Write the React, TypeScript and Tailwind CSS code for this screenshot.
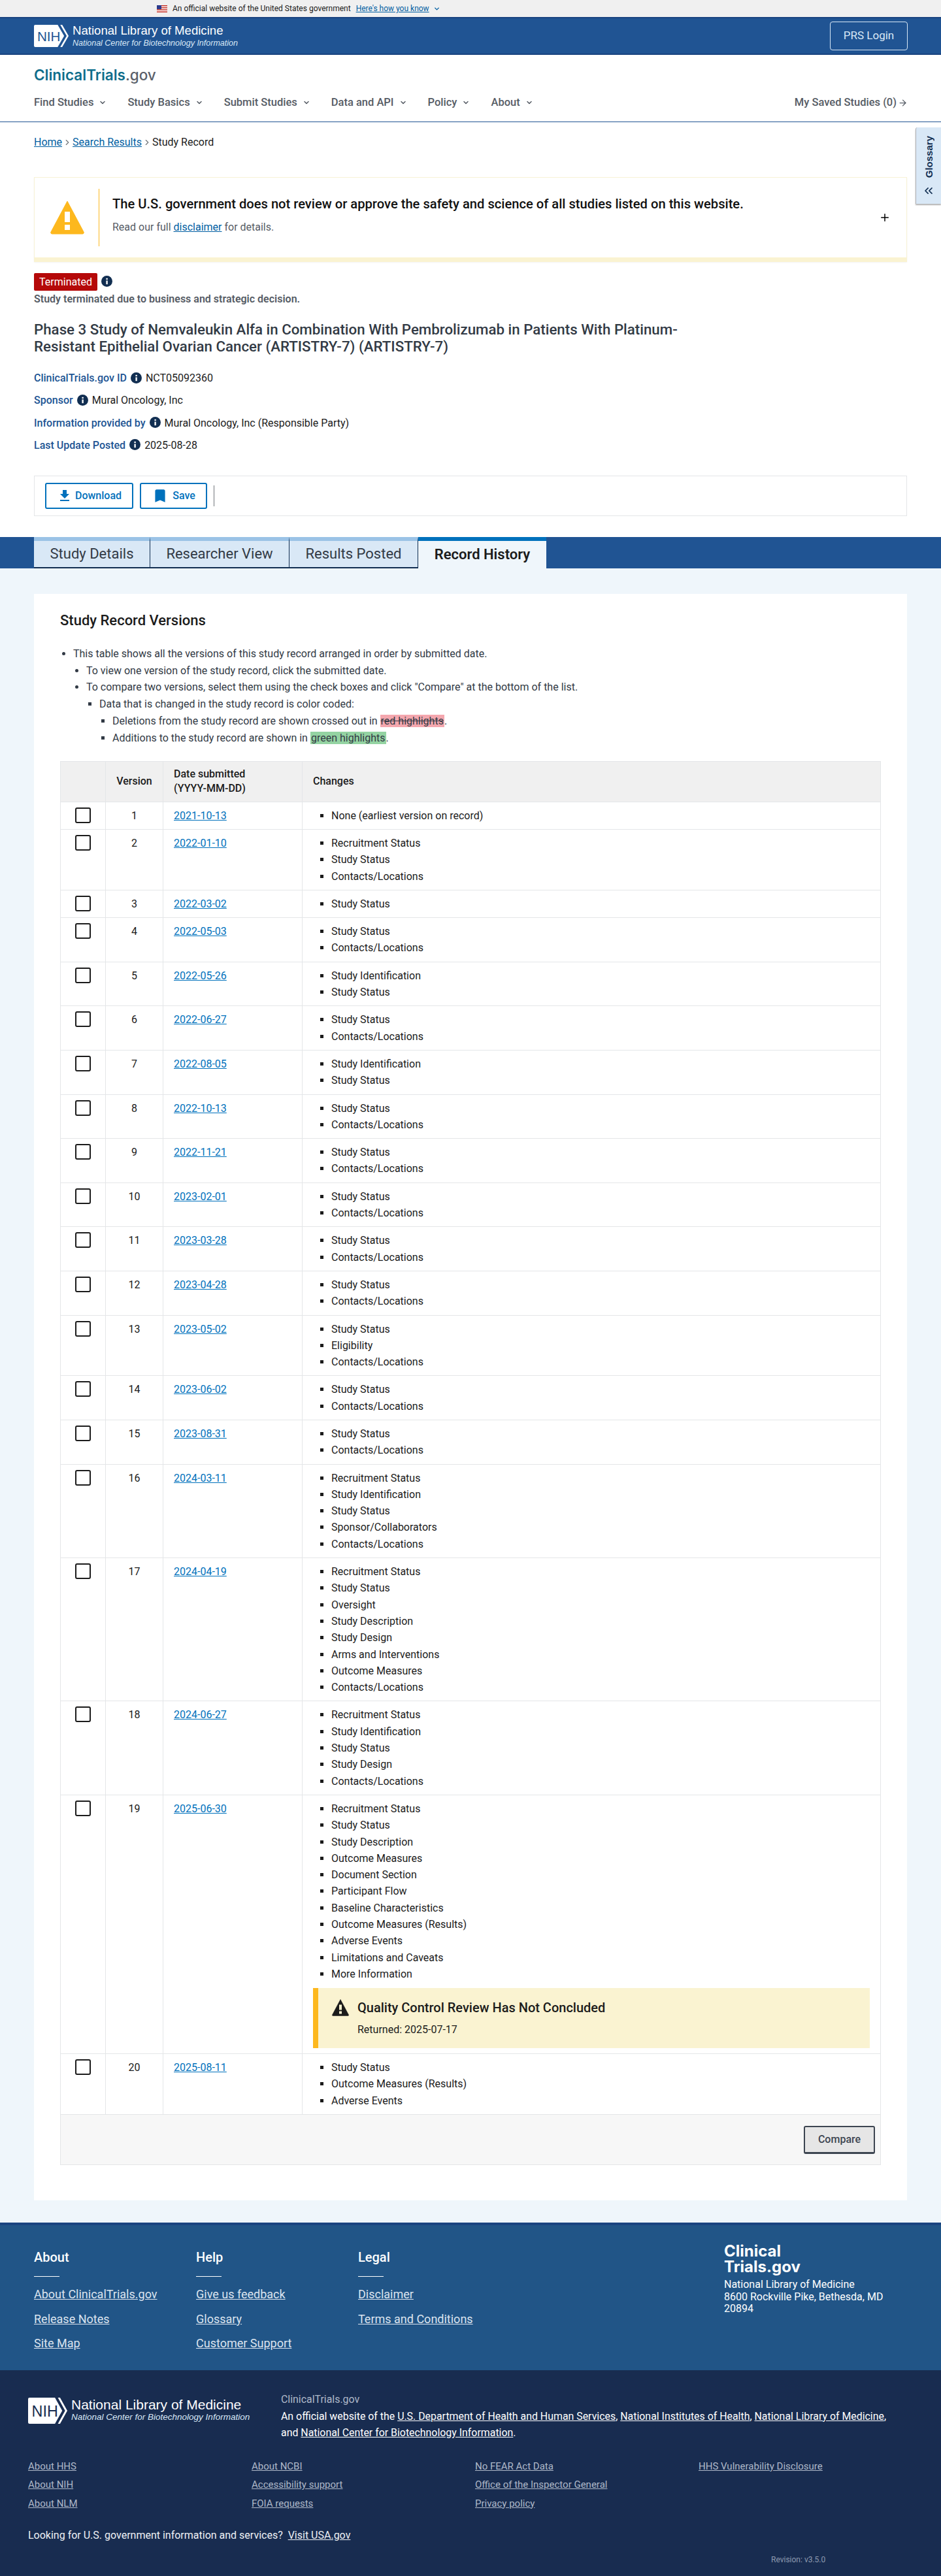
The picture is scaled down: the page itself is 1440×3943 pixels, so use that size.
import { ChevronDown, ChevronsLeft, ArrowRight, ChevronRight, Plus } from 'lucide-react';
import { MdFileDownload, MdBookmark } from 'react-icons/md';

interface VersionRow {
  version: number;
  date: string;
  changes: string[];
  alert?: boolean;
}

const statusContacts = ['Study Status', 'Contacts/Locations'];
const identStatus = ['Study Identification', 'Study Status'];

const versions: VersionRow[] = [
  { version: 1, date: '2021-10-13', changes: ['None (earliest version on record)'] },
  { version: 2, date: '2022-01-10', changes: ['Recruitment Status', 'Study Status', 'Contacts/Locations'] },
  { version: 3, date: '2022-03-02', changes: ['Study Status'] },
  { version: 4, date: '2022-05-03', changes: statusContacts },
  { version: 5, date: '2022-05-26', changes: identStatus },
  { version: 6, date: '2022-06-27', changes: statusContacts },
  { version: 7, date: '2022-08-05', changes: identStatus },
  { version: 8, date: '2022-10-13', changes: statusContacts },
  { version: 9, date: '2022-11-21', changes: statusContacts },
  { version: 10, date: '2023-02-01', changes: statusContacts },
  { version: 11, date: '2023-03-28', changes: statusContacts },
  { version: 12, date: '2023-04-28', changes: statusContacts },
  { version: 13, date: '2023-05-02', changes: ['Study Status', 'Eligibility', 'Contacts/Locations'] },
  { version: 14, date: '2023-06-02', changes: statusContacts },
  { version: 15, date: '2023-08-31', changes: statusContacts },
  {
    version: 16,
    date: '2024-03-11',
    changes: ['Recruitment Status', 'Study Identification', 'Study Status', 'Sponsor/Collaborators', 'Contacts/Locations'],
  },
  {
    version: 17,
    date: '2024-04-19',
    changes: [
      'Recruitment Status',
      'Study Status',
      'Oversight',
      'Study Description',
      'Study Design',
      'Arms and Interventions',
      'Outcome Measures',
      'Contacts/Locations',
    ],
  },
  {
    version: 18,
    date: '2024-06-27',
    changes: ['Recruitment Status', 'Study Identification', 'Study Status', 'Study Design', 'Contacts/Locations'],
  },
  {
    version: 19,
    date: '2025-06-30',
    alert: true,
    changes: [
      'Recruitment Status',
      'Study Status',
      'Study Description',
      'Outcome Measures',
      'Document Section',
      'Participant Flow',
      'Baseline Characteristics',
      'Outcome Measures (Results)',
      'Adverse Events',
      'Limitations and Caveats',
      'More Information',
    ],
  },
  { version: 20, date: '2025-08-11', changes: ['Study Status', 'Outcome Measures (Results)', 'Adverse Events'] },
];

const navItems = ['Find Studies', 'Study Basics', 'Submit Studies', 'Data and API', 'Policy', 'About'];
const tabs = [
  { label: 'Study Details', width: 'w-[178px]' },
  { label: 'Researcher View', width: 'w-[213px]' },
  { label: 'Results Posted', width: 'w-[197px]' },
];

const footerColumns = [
  { title: 'About', width: 'w-[248px]', links: ['About ClinicalTrials.gov', 'Release Notes', 'Site Map'] },
  { title: 'Help', width: 'w-[248px]', links: ['Give us feedback', 'Glossary', 'Customer Support'] },
  { title: 'Legal', width: 'w-[300px]', links: ['Disclaimer', 'Terms and Conditions'] },
];

const policyColumns = [
  ['About HHS', 'About NIH', 'About NLM'],
  ['About NCBI', 'Accessibility support', 'FOIA requests'],
  ['No FEAR Act Data', 'Office of the Inspector General', 'Privacy policy'],
  ['HHS Vulnerability Disclosure'],
];

function InfoIcon() {
  return (
    <svg viewBox="0 0 16 16" className="w-[17px] h-[17px] shrink-0 -mt-[2px]">
      <circle cx="8" cy="8" r="8" fill="#112e51" />
      <rect x="7" y="7" width="2.2" height="5.4" fill="#fff" />
      <rect x="7" y="3.6" width="2.2" height="2.1" fill="#fff" />
    </svg>
  );
}

function NihLogo({ fill, className }: { fill: string; className: string }) {
  return (
    <svg viewBox="0 0 54 36" preserveAspectRatio="none" className={className}>
      <path d="M2 0H37L47 18L37 36H2a2 2 0 0 1-2-2V2a2 2 0 0 1 2-2Z" fill="#fff" />
      <path d="M41 0H44L54 18L44 36H41L51 18Z" fill="#fff" />
      <text x="5" y="26" fontFamily="Liberation Sans, sans-serif" fontSize="21" fill={fill}>
        NIH
      </text>
    </svg>
  );
}

function WarningIcon({ className, fill, mark }: { className: string; fill: string; mark: string }) {
  return (
    <svg viewBox="0 0 52 52" className={className}>
      <path d="M26 1L51 48a2 2 0 0 1-2 3H3a2 2 0 0 1-2-3Z" fill={fill} stroke={fill} strokeLinejoin="round" strokeWidth="1" />
      <rect x="22" y="17" width="8" height="16" fill={mark} />
      <rect x="22" y="37" width="8" height="8" fill={mark} />
    </svg>
  );
}

function Flag() {
  return (
    <svg viewBox="0 0 16 11" className="w-[16px] h-[11px]">
      <rect width="16" height="11" fill="#fff" />
      <rect width="16" height="1.6" fill="#c8382e" />
      <rect y="3.1" width="16" height="1.6" fill="#c8382e" />
      <rect y="6.2" width="16" height="1.6" fill="#c8382e" />
      <rect y="9.4" width="16" height="1.6" fill="#c8382e" />
      <rect width="7" height="6" fill="#2b3a8c" />
    </svg>
  );
}

export default function App() {
  return (
    <div className="relative font-['Roboto',sans-serif] text-[16px] text-[#1b1b1b] bg-white">
      {/* Gov banner */}
      <div className="h-[26px] bg-[#f0f0f0] flex items-center pl-[240px] text-[12px] gap-[8px]">
        <Flag />
        <span className="text-[#1b1b1b]">An official website of the United States government</span>
        <span className="text-[#005ea2] underline">Here's how you know</span>
        <ChevronDown size={11} strokeWidth={3} className="text-[#005ea2] -ml-[2px]" />
      </div>

      {/* NLM header */}
      <div className="h-[58px] bg-[#205493] border-t-2 border-b-2 border-[#1a4480] flex items-center justify-between pl-[52px] pr-[51px]">
        <div className="flex items-center gap-[6px]">
          <NihLogo fill="#205493" className="w-[53px] h-[34px] shrink-0" />
          <div className="text-white leading-none">
            <div className="text-[18.6px] font-['Liberation_Sans',sans-serif]">National Library of Medicine</div>
            <div className="text-[12.5px] italic text-[#d9e8f6] mt-[3px] font-['Liberation_Sans',sans-serif]">
              National Center for Biotechnology Information
            </div>
          </div>
        </div>
        <div className="w-[119px] h-[44px] border border-[#d9e8f6] rounded-[4px] flex items-center justify-center text-[#d9e8f6] text-[17px]">
          PRS Login
        </div>
      </div>

      {/* Site nav */}
      <div className="h-[103px] border-b border-[#205493] px-[52px] pt-[15px]">
        <div className="font-['Inter',sans-serif] font-semibold text-[22.5px] leading-[32px]">
          <span className="text-[#0f6e8c]">ClinicalTrials</span>
          <span className="text-[#5b616b] font-medium">.gov</span>
        </div>
        <div className="flex items-center justify-between mt-[14px] text-[#565c65] font-medium text-[16.5px] leading-[24px]">
          <div className="flex gap-[32px]">
            {navItems.map((item) => (
              <div key={item} className="flex items-center gap-[8px]">
                {item}
                <ChevronDown size={12} strokeWidth={3} />
              </div>
            ))}
          </div>
          <div className="flex items-center gap-[2px] mr-[-1px]">
            My Saved Studies (0)
            <ArrowRight size={15} />
          </div>
        </div>
      </div>

      {/* Glossary tab */}
      <div className="absolute right-0 top-[195px] w-[39px] h-[117px] bg-[#d9e8f6] border-l border-[#aeb0b5] rounded-tl-[3px] shadow-[0_2px_2px_rgba(0,0,0,0.3)] flex flex-col items-center pt-[13px] gap-[10px]">
        <span className="[writing-mode:vertical-rl] rotate-180 font-bold text-[15px] leading-none text-[#112e51] font-['Liberation_Sans',sans-serif]">
          Glossary
        </span>
        <ChevronsLeft size={20} strokeWidth={2} className="text-[#112e51]" />
      </div>

      {/* Study header */}
      <div className="px-[52px] pt-[19px]">
        <div className="flex items-center leading-[24px] h-[24px]">
          <span className="text-[#005ea2] underline">Home</span>
          <ChevronRight size={14} className="text-[#71767a] mx-[1px]" />
          <span className="text-[#005ea2] underline">Search Results</span>
          <ChevronRight size={14} className="text-[#71767a] mx-[1px]" />
          <span>Study Record</span>
        </div>

        <div className="mt-[41px] w-[1336px] h-[130px] bg-white border border-[#f7f2d6] border-b-[7px] border-b-[#faf3d1] flex items-center shadow-[0_1px_2px_rgba(0,0,0,0.05)]">
          <div className="w-[98px] flex justify-center pl-[1px]">
            <WarningIcon className="w-[52px] h-[52px]" fill="#fdb81e" mark="#fff" />
          </div>
          <div className="w-px h-[88px] bg-[#fdb81e]" />
          <div className="pl-[20px] flex-1 pb-[8px]">
            <div className="text-[20.16px] font-medium leading-[28px] text-[#111]">
              The U.S. government does not review or approve the safety and science of all studies listed on this website.
            </div>
            <div className="leading-[24px] mt-[10px] text-[#565c65]">
              Read our full <span className="text-[#005ea2] underline">disclaimer</span> for details.
            </div>
          </div>
          <Plus size={18} strokeWidth={2} className="text-black mr-[24px]" />
        </div>

        <div className="flex items-center gap-[6px] mt-[17px]">
          <span className="w-[97px] h-[27px] rounded-[2px] bg-[#b50909] text-white flex items-center justify-center">
            Terminated
          </span>
          <InfoIcon />
        </div>
        <div className="font-semibold text-[#565c65] leading-[24px] mt-[1px]">
          Study terminated due to business and strategic decision.
        </div>
        <h1 className="text-[22.3px] font-medium leading-[26px] text-[#323a45] mt-[21px] w-[1040px]">
          Phase 3 Study of Nemvaleukin Alfa in Combination With Pembrolizumab in Patients With Platinum-Resistant
          Epithelial Ovarian Cancer (ARTISTRY-7) (ARTISTRY-7)
        </h1>

        <div className="mt-[24px] leading-[24px] flex flex-col gap-[10.3px]">
          {[
            ['ClinicalTrials.gov ID', 'NCT05092360'],
            ['Sponsor', 'Mural Oncology, Inc'],
            ['Information provided by', 'Mural Oncology, Inc (Responsible Party)'],
            ['Last Update Posted', '2025-08-28'],
          ].map(([label, value]) => (
            <div key={label} className="flex items-center gap-[6px]">
              <span className="font-medium text-[#205493]">{label}</span>
              <InfoIcon />
              <span>{value}</span>
            </div>
          ))}
        </div>

        <div className="mt-[34px] w-[1336px] h-[62px] border border-[#e4e6e8] flex items-center pl-[16px] gap-[10px]">
          <div className="w-[135px] h-[40px] rounded-[3px] border-2 border-[#0071bc] text-[#0071bc] font-medium flex items-center justify-center gap-[4px]">
            <MdFileDownload size={24} />
            Download
          </div>
          <div className="w-[103px] h-[40px] rounded-[3px] border-2 border-[#0071bc] text-[#0071bc] font-medium flex items-center justify-center gap-[6px]">
            <MdBookmark size={26} />
            Save
          </div>
          <div className="w-px h-[32px] bg-[#71767a]" />
        </div>
      </div>

      {/* Tab bar */}
      <div className="mt-[32px] h-[48px] bg-[#205493] pl-[52px] flex">
        {tabs.map((tab) => (
          <div
            key={tab.label}
            className={`${tab.width} h-[48px] bg-[#d9e8f6] border-t-[6px] border-t-[#9bc3e6] border-r border-r-[#112e51] border-b-2 border-b-[#112e51] flex items-center justify-center text-[22px] text-[#323a45]`}
          >
            {tab.label}
          </div>
        ))}
        <div className="w-[196px] h-[48px] bg-[#eff6fb] border-t-[6px] border-t-[#0071bc] flex items-center justify-center text-[22px] font-semibold text-[#1b1b1b]">
          Record History
        </div>
      </div>

      {/* Record history */}
      <div className="bg-[#eff6fb] pt-[39px] pb-[34px] px-[52px]">
        <div className="w-[1336px] bg-white pt-[27px] px-[40px] pb-[54px]">
          <h2 className="text-[22px] font-medium leading-[28px] text-[#1b1b1b]">Study Record Versions</h2>
          <ul className="list-disc pl-[20px] mt-[24px] leading-[25.8px] text-[#323a45]">
            <li>
              This table shows all the versions of this study record arranged in order by submitted date.
              <ul className="list-disc pl-[20px]">
                <li>To view one version of the study record, click the submitted date.</li>
                <li>
                  To compare two versions, select them using the check boxes and click "Compare" at the bottom of the list.
                  <ul className="list-[square] pl-[20px]">
                    <li>
                      Data that is changed in the study record is color coded:
                      <ul className="list-[square] pl-[20px]">
                        <li>
                          Deletions from the study record are shown crossed out in{' '}
                          <span className="bg-[#f4a7ae] line-through px-px">red highlights</span>.
                        </li>
                        <li>
                          Additions to the study record are shown in{' '}
                          <span className="bg-[#94d3a2] px-px">green highlights</span>.
                        </li>
                      </ul>
                    </li>
                  </ul>
                </li>
              </ul>
            </li>
          </ul>

          <table className="mt-[22px] w-[1255px] table-fixed border-collapse text-[#1b1b1b]">
            <colgroup>
              <col className="w-[69px]" />
              <col className="w-[88px]" />
              <col className="w-[213px]" />
              <col className="w-[885px]" />
            </colgroup>
            <thead>
              <tr className="h-[62px] bg-[#f0f0f0] leading-[22px]">
                <th className="border border-[#e4e6e8]" />
                <th className="border border-[#e4e6e8] font-medium">Version</th>
                <th className="border border-[#e4e6e8] font-medium text-left pl-[16px]">
                  Date submitted
                  <br />
                  (YYYY-MM-DD)
                </th>
                <th className="border border-[#e4e6e8] font-medium text-left pl-[16px]">Changes</th>
              </tr>
            </thead>
            <tbody>
              {versions.map((row) => (
                <tr key={row.version} className="align-top border-b border-[#e4e6e8]">
                  <td className="border-x border-[#e4e6e8] pt-[8px]">
                    <div className="ml-[22px] w-[24px] h-[24px] rounded-[3px] border-2 border-[#1b1b1b] bg-white" />
                  </td>
                  <td className="border-x border-[#e4e6e8] pt-[8px] text-center leading-[25px]">{row.version}</td>
                  <td className="border-x border-[#e4e6e8] pt-[8px] pl-[16px] leading-[25px]">
                    <span className="text-[#0071bc] underline">{row.date}</span>
                  </td>
                  <td className="border-x border-[#e4e6e8] px-[16px] pt-[8px] pb-[8px]">
                    <ul className="list-[square] pl-[28px] leading-[25.3px]">
                      {row.changes.map((change) => (
                        <li key={change}>{change}</li>
                      ))}
                    </ul>
                    {row.alert && (
                      <div className="mt-[9px] h-[92px] bg-[#faf3d1] border-l-[8px] border-[#fdb81e] pl-[20px] pt-[14px]">
                        <div className="flex items-center gap-[12px]">
                          <WarningIcon className="w-[28px] h-[26px]" fill="#1b1b1b" mark="#faf3d1" />
                          <span className="text-[20px] font-medium leading-[32px]">Quality Control Review Has Not Concluded</span>
                        </div>
                        <div className="pl-[40px] mt-[5px] leading-[25px]">Returned: 2025-07-17</div>
                      </div>
                    )}
                  </td>
                </tr>
              ))}
              <tr className="h-[77px] bg-[#f7f7f7] border border-[#e4e6e8]">
                <td colSpan={4} className="text-right pr-[8px]">
                  <span className="inline-flex w-[109px] h-[43px] items-center justify-center rounded-[3px] border-2 border-[#3d4551] border-b-[3px] bg-[#e6e6e6] font-medium text-[#3d4551]">
                    Compare
                  </span>
                </td>
              </tr>
            </tbody>
          </table>
        </div>
      </div>

      {/* Site footer */}
      <div className="h-[226px] bg-[#215587] border-t-4 border-[#1a4480] pl-[52px] pt-[35px] flex text-white">
        {footerColumns.map((col) => (
          <div key={col.title} className={col.width}>
            <div className="text-[20px] font-medium leading-[28px]">{col.title}</div>
            <div className="w-[39px] h-px bg-white mt-[15px]" />
            <div className="mt-[15px] flex flex-col gap-[13px] text-[18px] leading-[24.5px] text-[#dce4ef]">
              {col.links.map((link) => (
                <span key={link} className="underline">
                  {link}
                </span>
              ))}
            </div>
          </div>
        ))}
        <div className="ml-[260px] -mt-[7px]">
          <div className="font-['Inter',sans-serif] font-bold text-[24px] leading-[24px]">
            Clinical
            <br />
            Trials.gov
          </div>
          <div className="leading-[18.5px] mt-[6px] w-[250px]">
            National Library of Medicine
            <br />
            8600 Rockville Pike, Bethesda, MD 20894
          </div>
        </div>
      </div>

      {/* NLM footer */}
      <div className="h-[316px] bg-[#182c50] pl-[43px] pt-[32px] text-white relative">
        <div className="flex">
          <div className="w-[387px] flex items-start gap-[6px] pt-[10px]">
            <NihLogo fill="#182c50" className="w-[60px] h-[40px] shrink-0" />
            <div className="leading-none">
              <div className="text-[21px] font-['Liberation_Sans',sans-serif] whitespace-nowrap">National Library of Medicine</div>
              <div className="text-[13.5px] italic text-[#d9e8f6] mt-[2px] font-['Liberation_Sans',sans-serif] whitespace-nowrap">
                National Center for Biotechnology Information
              </div>
            </div>
          </div>
          <div className="w-[940px] text-[15.9px] leading-[25.5px]">
            <div className="text-[#aeb8c8]">ClinicalTrials.gov</div>
            <div>
              An official website of the <span className="underline">U.S. Department of Health and Human Services</span>,{' '}
              <span className="underline">National Institutes of Health</span>, <span className="underline">National Library of Medicine</span>,
              and <span className="underline">National Center for Biotechnology Information</span>.
            </div>
          </div>
        </div>
        <div className="flex mt-[28px] text-[15px] text-[#aeb8c8]">
          {policyColumns.map((col) => (
            <div key={col[0]} className="w-[342px] flex flex-col gap-[8.5px] leading-[20px]">
              {col.map((link) => (
                <span key={link} className="underline">
                  {link}
                </span>
              ))}
            </div>
          ))}
        </div>
        <div className="mt-[27px] leading-[24px] text-[#eef1f5]">
          Looking for U.S. government information and services?&nbsp; <span className="underline">Visit USA.gov</span>
        </div>
        <div className="absolute left-[1180px] top-[281px] text-[12px] text-[#8f9bb0]">Revision: v3.5.0</div>
      </div>
    </div>
  );
}
